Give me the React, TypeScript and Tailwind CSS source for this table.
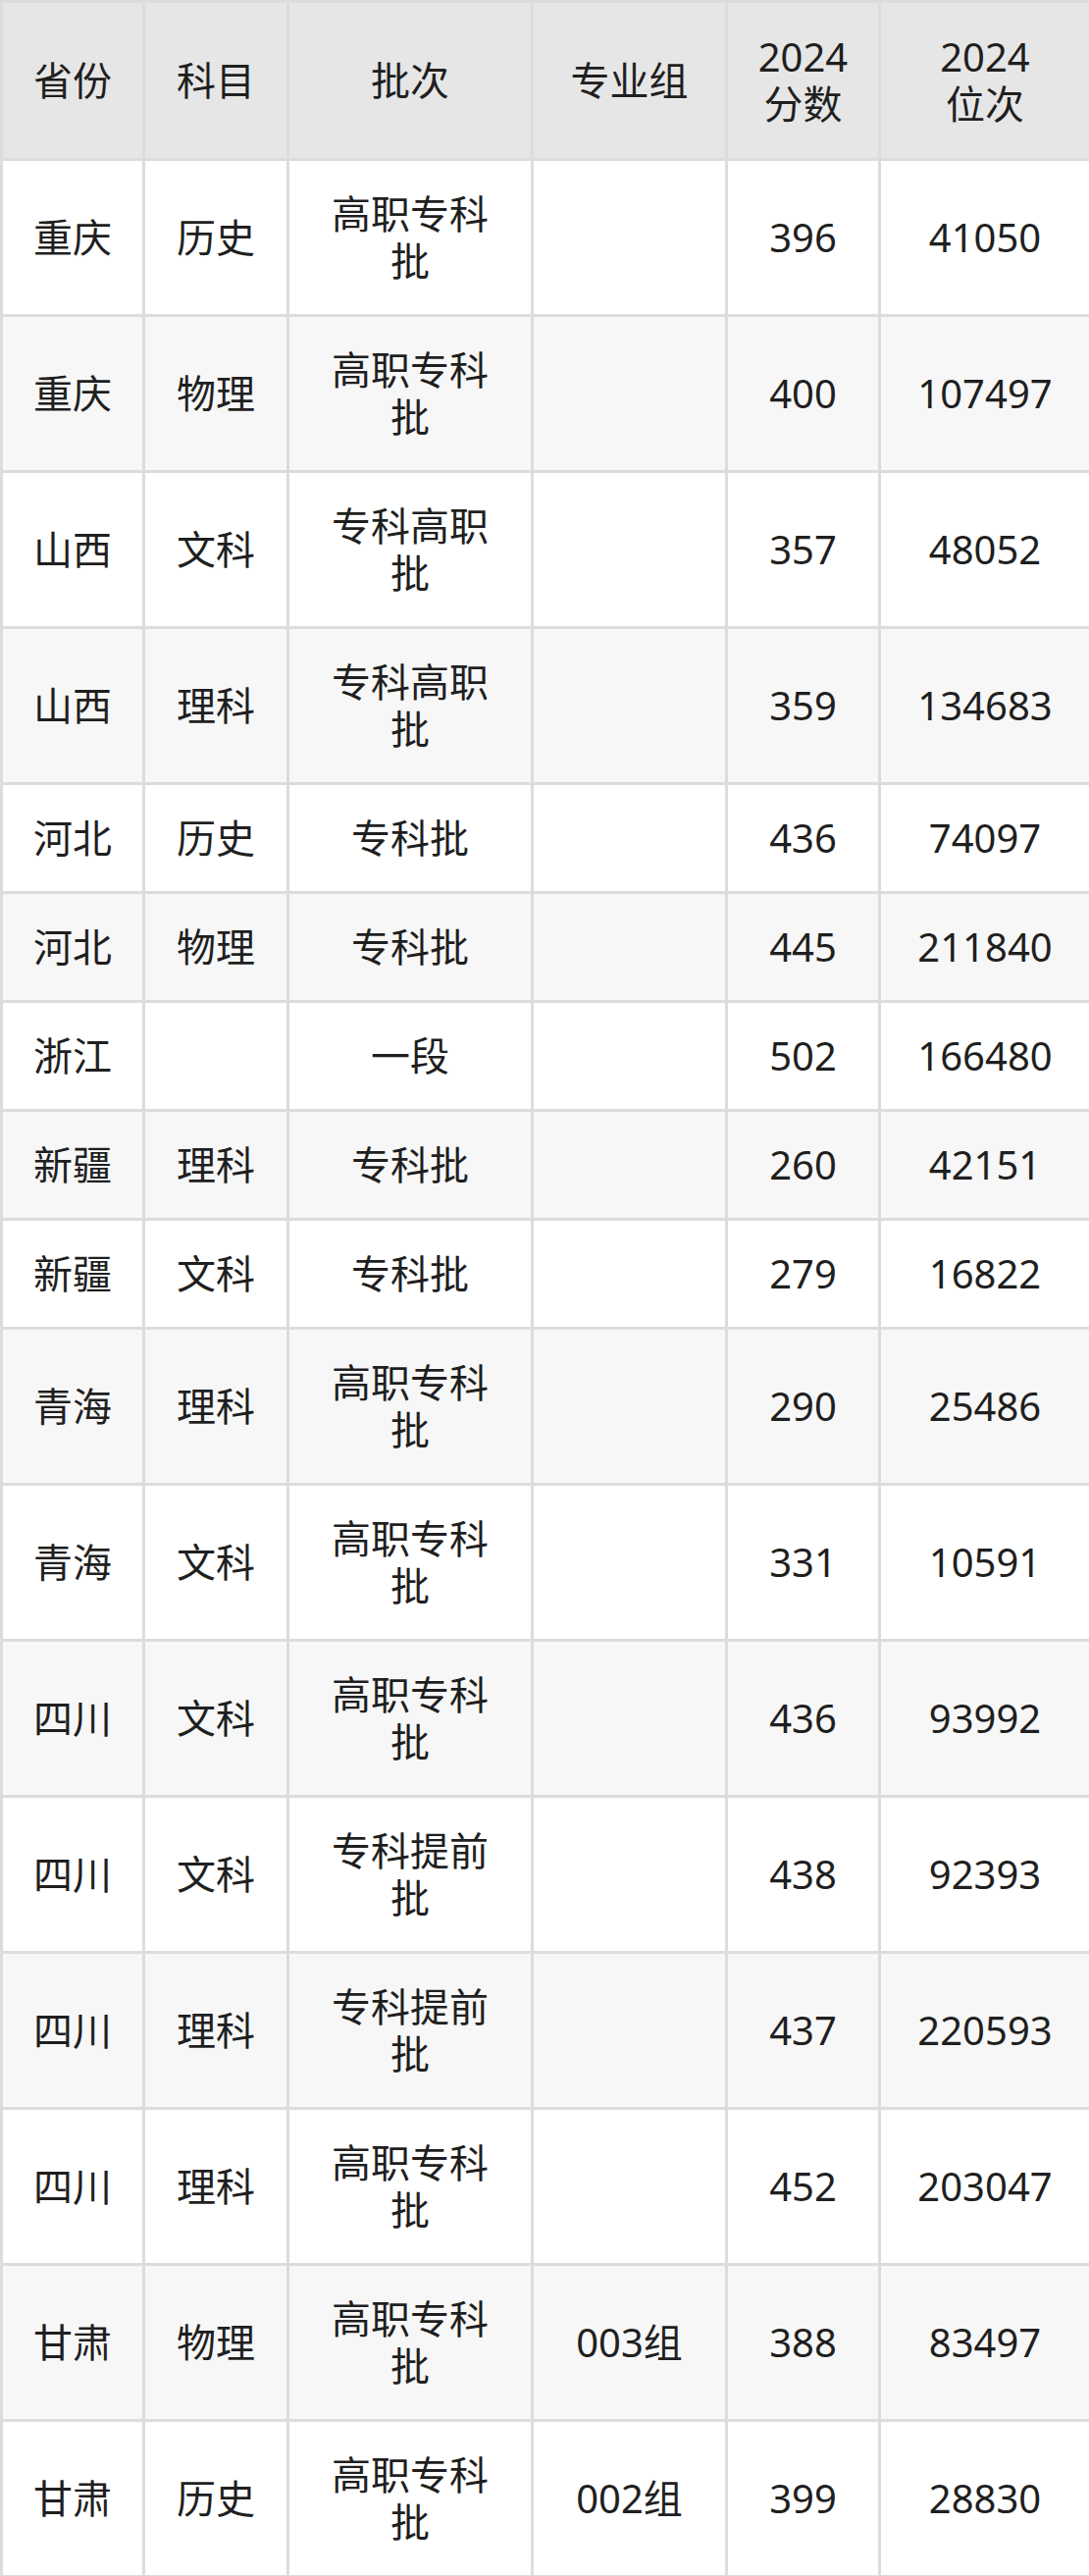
const rows: { p: string; s: string; b: string; g: string; score: string; rank: string; tall: boolean }[] = [
  { p: "重庆", s: "历史", b: "高职专科批", g: "", score: "396", rank: "41050", tall: true },
  { p: "重庆", s: "物理", b: "高职专科批", g: "", score: "400", rank: "107497", tall: true },
  { p: "山西", s: "文科", b: "专科高职批", g: "", score: "357", rank: "48052", tall: true },
  { p: "山西", s: "理科", b: "专科高职批", g: "", score: "359", rank: "134683", tall: true },
  { p: "河北", s: "历史", b: "专科批", g: "", score: "436", rank: "74097", tall: false },
  { p: "河北", s: "物理", b: "专科批", g: "", score: "445", rank: "211840", tall: false },
  { p: "浙江", s: "", b: "一段", g: "", score: "502", rank: "166480", tall: false },
  { p: "新疆", s: "理科", b: "专科批", g: "", score: "260", rank: "42151", tall: false },
  { p: "新疆", s: "文科", b: "专科批", g: "", score: "279", rank: "16822", tall: false },
  { p: "青海", s: "理科", b: "高职专科批", g: "", score: "290", rank: "25486", tall: true },
  { p: "青海", s: "文科", b: "高职专科批", g: "", score: "331", rank: "10591", tall: true },
  { p: "四川", s: "文科", b: "高职专科批", g: "", score: "436", rank: "93992", tall: true },
  { p: "四川", s: "文科", b: "专科提前批", g: "", score: "438", rank: "92393", tall: true },
  { p: "四川", s: "理科", b: "专科提前批", g: "", score: "437", rank: "220593", tall: true },
  { p: "四川", s: "理科", b: "高职专科批", g: "", score: "452", rank: "203047", tall: true },
  { p: "甘肃", s: "物理", b: "高职专科批", g: "003组", score: "388", rank: "83497", tall: true },
  { p: "甘肃", s: "历史", b: "高职专科批", g: "002组", score: "399", rank: "28830", tall: true },
];

const cell = "border-[3px] border-[#dcdcdc] px-[30px] py-0 text-center align-middle";

export default function App() {
  return (
    <div className="w-[1110px] bg-white text-[#1f1f1f] font-['Noto_Sans','Noto_Sans_CJK_SC',sans-serif] text-[40px] leading-[48px]">
      <table className="w-[1110px] table-fixed border-collapse">
        <colgroup>
          <col className="w-[145px]" />
          <col className="w-[147px]" />
          <col className="w-[249px]" />
          <col className="w-[198px]" />
          <col className="w-[156px]" />
          <col className="w-[215px]" />
        </colgroup>
        <thead>
          <tr className="h-[161px] bg-[#e6e6e6]">
            <th className={`${cell} font-normal`}>省份</th>
            <th className={`${cell} font-normal`}>科目</th>
            <th className={`${cell} font-normal`}>批次</th>
            <th className={`${cell} font-normal`}>专业组</th>
            <th className={`${cell} font-normal`}>
              2024
              <br />
              分数
            </th>
            <th className={`${cell} font-normal`}>
              2024
              <br />
              位次
            </th>
          </tr>
        </thead>
        <tbody>
          {rows.map((r, i) => (
            <tr
              key={i}
              className={`${r.tall ? "h-[159px]" : "h-[111px]"} ${i % 2 === 1 ? "bg-[#f7f7f7]" : "bg-white"}`}
            >
              <td className={cell}>{r.p}</td>
              <td className={cell}>{r.s}</td>
              <td className={cell}>{r.b}</td>
              <td className={cell}>{r.g}</td>
              <td className={cell}>{r.score}</td>
              <td className={cell}>{r.rank}</td>
            </tr>
          ))}
        </tbody>
      </table>
    </div>
  );
}
